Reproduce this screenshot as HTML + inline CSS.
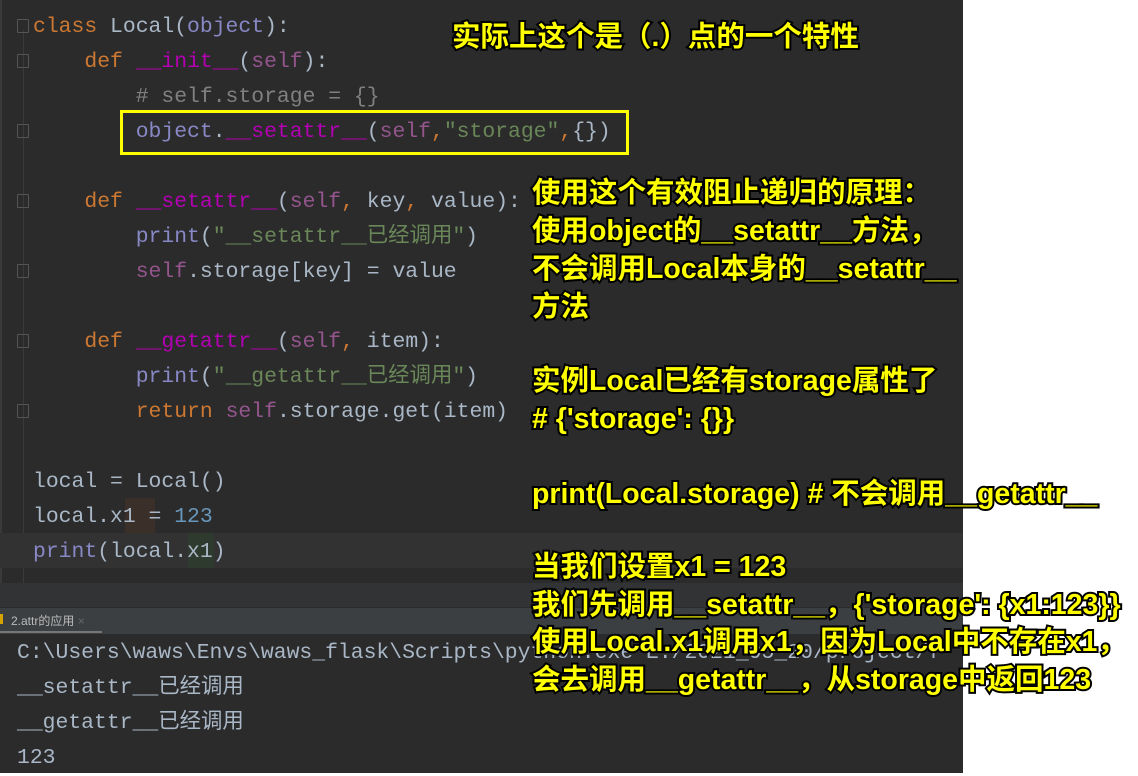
<!DOCTYPE html>
<html><head><meta charset="utf-8"><style>
body{margin:0;width:1138px;height:773px;background:#fff;position:relative;overflow:hidden}
#ide{position:absolute;left:0;top:0;width:963px;height:773px;background:#2b2b2b}
.ln{position:absolute;left:33px;font:21.4px/35px "Liberation Mono","Noto Sans CJK SC",monospace;color:#a9b7c6;white-space:pre}
.k{color:#cc7832}.f{color:#b200b2}.s{color:#94558d}.g{color:#6a8759}.c{color:#808080}.n{color:#6897bb}.b{color:#8888c6}
.a{position:absolute;font:bold 28.5px/38px "Liberation Sans","Noto Sans CJK SC",sans-serif;color:#ffff00;white-space:pre;-webkit-text-stroke:4px #000;paint-order:stroke fill}
.fold{position:absolute;left:17px;width:10px;height:12px;border:1px solid #555;border-radius:1px}
</style></head><body>
<div id="ide">
<div style="position:absolute;left:0;top:0;width:2px;height:583px;background:#3a3a3a"></div>
<div style="position:absolute;left:23px;top:30px;width:1px;height:553px;background:#3a3a3a"></div>
<div style="position:absolute;left:0;top:533px;width:963px;height:35px;background:#323232"></div>
<div style="position:absolute;left:125px;top:498px;width:30px;height:35px;background:#3b2f2a"></div>
<div style="position:absolute;left:188px;top:533px;width:26px;height:35px;background:#2f3a2e"></div>
<div class="fold" style="top:19px"></div><div class="fold" style="top:54px"></div><div class="fold" style="top:124px"></div><div class="fold" style="top:194px"></div><div class="fold" style="top:264px"></div><div class="fold" style="top:334px"></div><div class="fold" style="top:404px"></div>
<div class="ln" style="top:10px"><span class="k">class</span> Local(<span class="b">object</span>):</div>
<div class="ln" style="top:45px">    <span class="k">def</span> <span class="f">__init__</span>(<span class="s">self</span>):</div>
<div class="ln" style="top:80px">        <span class="c"># self.storage = {}</span></div>
<div class="ln" style="top:115px">        <span class="b">object</span>.<span class="f">__setattr__</span>(<span class="s">self</span><span class="k">,</span><span class="g">"storage"</span><span class="k">,</span>{})</div>
<div class="ln" style="top:185px">    <span class="k">def</span> <span class="f">__setattr__</span>(<span class="s">self</span><span class="k">,</span> key<span class="k">,</span> value):</div>
<div class="ln" style="top:220px">        <span class="b">print</span>(<span class="g">"__setattr__已经调用"</span>)</div>
<div class="ln" style="top:255px">        <span class="s">self</span>.storage[key] = value</div>
<div class="ln" style="top:325px">    <span class="k">def</span> <span class="f">__getattr__</span>(<span class="s">self</span><span class="k">,</span> item):</div>
<div class="ln" style="top:360px">        <span class="b">print</span>(<span class="g">"__getattr__已经调用"</span>)</div>
<div class="ln" style="top:395px">        <span class="k">return</span> <span class="s">self</span>.storage.get(item)</div>
<div class="ln" style="top:465px">local = Local()</div>
<div class="ln" style="top:500px">local.x1 = <span class="n">123</span></div>
<div class="ln" style="top:535px"><span class="b">print</span>(local.x1)</div>
<div style="position:absolute;left:120px;top:110px;width:503px;height:39px;border:3px solid #ffff00"></div>
<div style="position:absolute;left:0;top:583px;width:963px;height:24px;background:#313335"></div>
<div style="position:absolute;left:0;top:607px;width:963px;height:26px;background:#3c3f41;border-top:1px solid #2b2b2b"></div>
<div style="position:absolute;left:0;top:614px;width:3px;height:10px;background:#d6a400"></div>
<div style="position:absolute;left:11px;top:612px;font:12px/18px 'Liberation Sans','Noto Sans CJK SC',sans-serif;color:#bbb">2.attr的应用 <span style="color:#666">×</span></div>
<div style="position:absolute;left:0;top:631px;width:102px;height:2px;background:#777"></div>
<div class="ln" style="left:17px;top:636px">C:\Users\waws\Envs\waws_flask\Scripts\python.exe E:/2021_05_20/project/f</div>
<div class="ln" style="left:17px;top:671px">__setattr__已经调用</div>
<div class="ln" style="left:17px;top:706px">__getattr__已经调用</div>
<div class="ln" style="left:17px;top:741px">123</div>
</div>
<div class="a" style="left:452px;top:18px">实际上这个是（.）点的一个特性</div>
<div class="a" style="left:532px;top:174px">使用这个有效阻止递归的原理：
使用object的__setattr__方法，
不会调用Local本身的__setattr__
方法</div>
<div class="a" style="left:532px;top:362px">实例Local已经有storage属性了
# {'storage': {}}</div>
<div class="a" style="left:532px;top:475px">print(Local.storage) # 不会调用__getattr__</div>
<div class="a" style="left:532px;top:549px;line-height:37.5px">当我们设置x1 = 123
我们先调用__setattr__，{'storage': {x1:123}}
使用Local.x1调用x1，因为Local中不存在x1，
会去调用__getattr__，从storage中返回123</div>
</body></html>
